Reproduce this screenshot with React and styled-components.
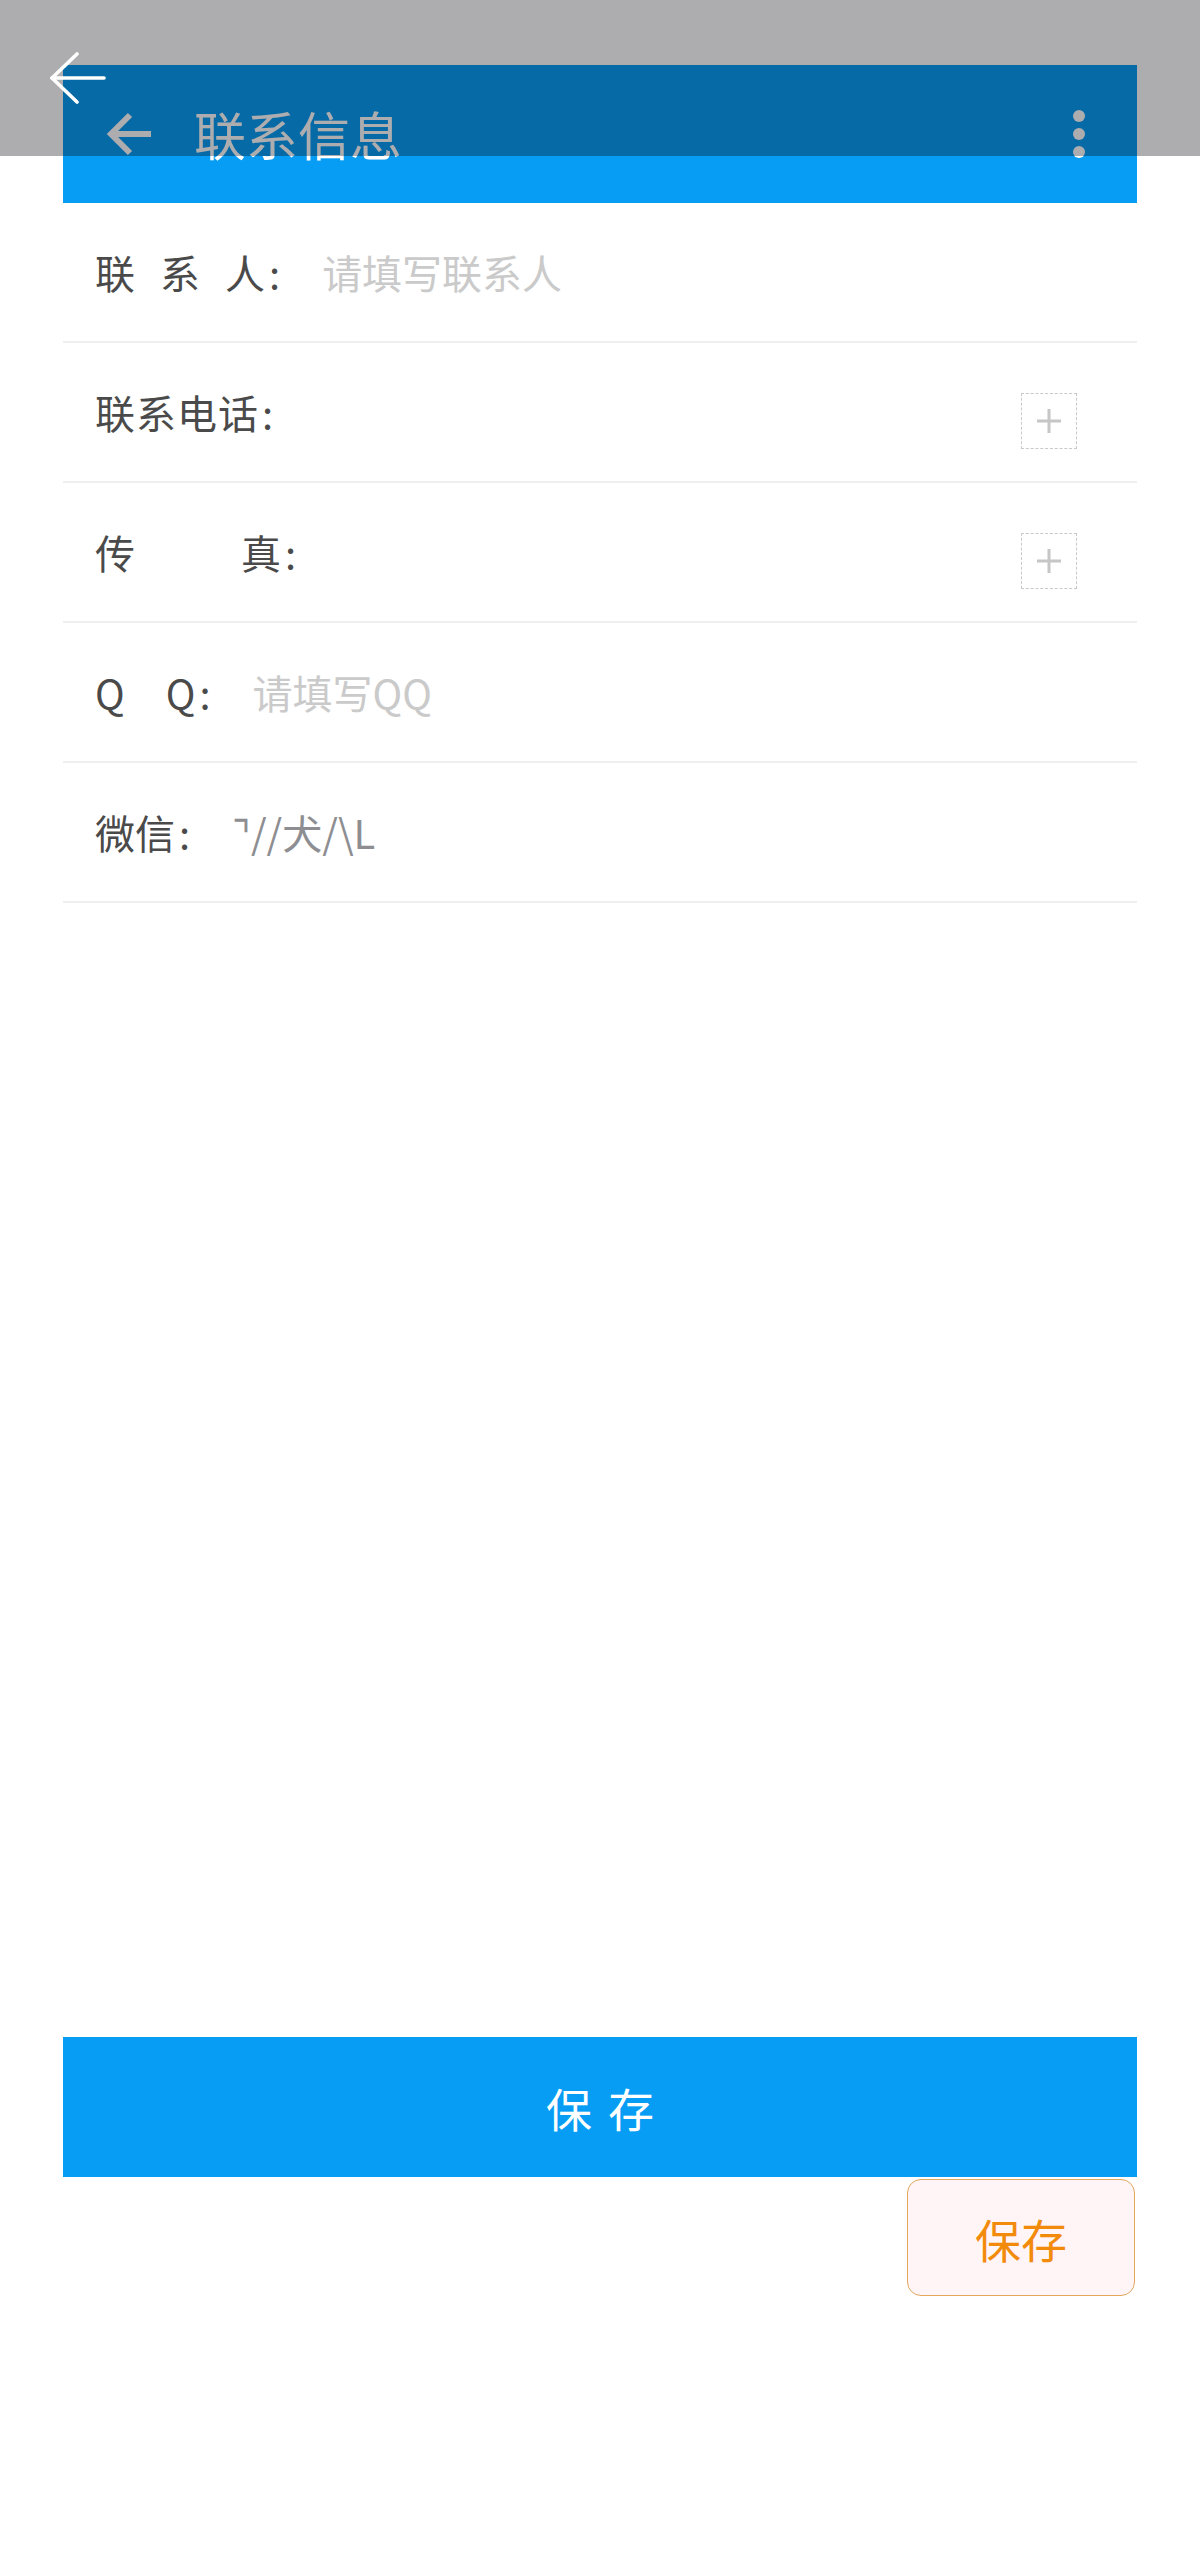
import React from 'react';
import styled, { createGlobalStyle } from 'styled-components';

const GlobalStyle = createGlobalStyle`
  html, body {
    margin: 0;
    padding: 0;
    background: #ffffff;
  }

  body {
    font-family: "Noto Sans CJK SC", "Noto Sans", "DejaVu Sans", sans-serif;
  }

  * {
    box-sizing: border-box;
  }
`;

const Page = styled.div`
  position: relative;
  display: flex;
  flex-direction: column;
  height: 2550px;
  padding: 65px 63px 0;
  background: #ffffff;
  overflow: hidden;
`;

// dimmed strip that sits over the top of the page, with its own back arrow
const TopShade = styled.div`
  position: absolute;
  top: 0;
  left: 0;
  right: 0;
  height: 156px;
  padding: 52px 0 0 49px;
  background: rgba(4, 0, 6, 0.325);
  z-index: 5;
`;

const HeaderBar = styled.header`
  display: flex;
  align-items: center;
  height: 138px;
  padding: 0 52px 0 42px;
  background: #079df4;
  color: #ffffff;
`;

const Title = styled.h1`
  flex: 1;
  margin: 0 0 0 43px;
  font-size: 52px;
  font-weight: 400;
  line-height: 1;
`;

const MoreDots = styled.div`
  display: flex;
  flex-direction: column;
  gap: 6px;
`;

const Dot = styled.span`
  width: 12px;
  height: 12px;
  border-radius: 50%;
  background: #ffffff;
`;

const Form = styled.div`
  display: flex;
  flex-direction: column;
`;

const Row = styled.div`
  display: flex;
  align-items: center;
  height: 140px;
  padding: 0 60px 0 32px;
  border-bottom: 2px solid #efefef;
`;

const Label = styled.label`
  display: flex;
  align-items: baseline;
  font-size: 40px;
  color: #4a4a4a;
  white-space: nowrap;
`;

// every char but the last gets the spread, so the colon sits right after the last one
const Spread = styled.span`
  letter-spacing: ${props => props.$spacing}px;
`;

const Colon = styled.span`
  margin-left: 4px;
`;

const Field = styled.input`
  flex: 1;
  min-width: 0;
  margin-left: 42px;
  padding: 0;
  border: none;
  outline: none;
  background: transparent;
  font-family: inherit;
  font-size: 40px;
  color: #8e8e92;

  &::placeholder {
    color: #cacaca;
  }
`;

const AddBox = styled.button`
  display: flex;
  align-items: center;
  justify-content: center;
  width: 56px;
  height: 56px;
  margin-top: 18px;
  padding: 0;
  border: 1px dashed #c9c9c9;
  background: #ffffff;
  cursor: pointer;
`;

const SaveBar = styled.button`
  height: 140px;
  margin-top: 1134px;
  padding: 0 0 0 16px;
  border: none;
  background: #079df4;
  color: #ffffff;
  font-family: inherit;
  font-size: 46px;
  letter-spacing: 16px;
  cursor: pointer;
`;

const FloatSave = styled.button`
  align-self: flex-end;
  width: 228px;
  height: 117px;
  margin: 2px 2px 0 0;
  border: 1.5px solid #e2a75c;
  border-radius: 14px;
  background: #fff4f6;
  color: #f28b0c;
  font-family: inherit;
  font-size: 46px;
  cursor: pointer;
`;

const ThinArrow = () => (
  <svg width="58" height="52" viewBox="0 0 58 52" fill="none" stroke="#ffffff" strokeWidth="3.6" strokeLinecap="round" strokeLinejoin="round">
    <path d="M55 26H3" />
    <path d="M28 2L3 26L28 50" />
  </svg>
);

const BackArrow = () => (
  <svg width="46" height="46" viewBox="0 0 46 46" fill="none" stroke="#ffffff" strokeWidth="6">
    <path d="M46 23H6" />
    <path d="M25 4L6 23L25 42" />
  </svg>
);

const Plus = () => (
  <svg width="24" height="24" viewBox="0 0 24 24" stroke="#c6c6c6" strokeWidth="3">
    <path d="M12 0V24M0 12H24" />
  </svg>
);

const fields = [
  { label: '联系人', spacing: 25, placeholder: '请填写联系人' },
  { label: '联系电话', spacing: 1, add: true },
  { label: '传真', spacing: 106, add: true },
  { label: 'QQ', spacing: 41, placeholder: '请填写QQ' },
  { label: '微信', spacing: 0, value: '⌝//犬/\\L' },
];

export default function App() {
  return (
    <>
      <GlobalStyle />
      <Page>
        <TopShade>
          <ThinArrow />
        </TopShade>

        <HeaderBar>
          <BackArrow />
          <Title>联系信息</Title>
          <MoreDots>
            <Dot />
            <Dot />
            <Dot />
          </MoreDots>
        </HeaderBar>

        <Form>
          {fields.map(field => (
            <Row key={field.label}>
              <Label>
                <Spread $spacing={field.spacing}>{field.label.slice(0, -1)}</Spread>
                <span>{field.label.slice(-1)}</span>
                <Colon>:</Colon>
              </Label>
              <Field
                placeholder={field.placeholder}
                defaultValue={field.value}
              />
              {field.add && (
                <AddBox aria-label="添加">
                  <Plus />
                </AddBox>
              )}
            </Row>
          ))}
        </Form>

        <SaveBar>保存</SaveBar>
        <FloatSave>保存</FloatSave>
      </Page>
    </>
  );
}
